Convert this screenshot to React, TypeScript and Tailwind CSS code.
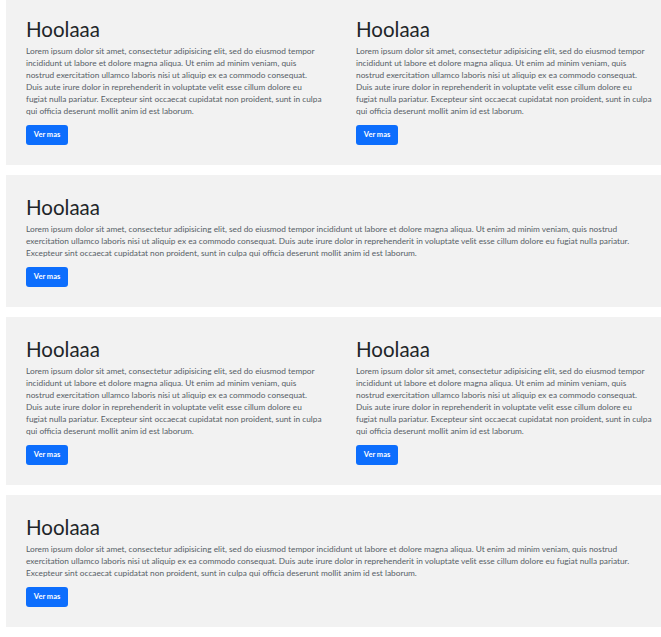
import React from "react";

const LOREM =
  "Lorem ipsum dolor sit amet, consectetur adipisicing elit, sed do eiusmod tempor incididunt ut labore et dolore magna aliqua. Ut enim ad minim veniam, quis nostrud exercitation ullamco laboris nisi ut aliquip ex ea commodo consequat. Duis aute irure dolor in reprehenderit in voluptate velit esse cillum dolore eu fugiat nulla pariatur. Excepteur sint occaecat cupidatat non proident, sunt in culpa qui officia deserunt mollit anim id est laborum.";

function Block() {
  return (
    <div className="min-w-0">
      <h1 className="text-[20.5px] leading-[24px] font-normal text-[#212529] mb-[4px]">Hoolaaa</h1>
      <p className="text-[8.3px] leading-[12px] text-[#565e66] mb-[8px]">{LOREM}</p>
      <button className="block h-[20px] w-[42px] rounded-[3px] bg-[#0d6efd] text-white text-[7.5px] leading-[12px] font-bold">
        Ver mas
      </button>
    </div>
  );
}

function TwoCol() {
  return (
    <section className="bg-[#f2f2f2] p-[20px] overflow-hidden">
      <div className="grid grid-cols-[296px_296px] gap-x-[34px]">
        <Block />
        <Block />
      </div>
    </section>
  );
}

function OneCol() {
  return (
    <section className="bg-[#f2f2f2] p-[20px] overflow-hidden">
      <div className="w-[620px]">
        <Block />
      </div>
    </section>
  );
}

export default function App() {
  return (
    <div
      className="w-[661px] h-[637px] overflow-hidden bg-white"
      style={{ fontFamily: "Lato, 'Noto Sans', sans-serif" }}
    >
      <div className="ml-[6px] -mt-[3px] flex flex-col gap-[10px]">
        <TwoCol />
        <OneCol />
        <TwoCol />
        <OneCol />
      </div>
    </div>
  );
}
